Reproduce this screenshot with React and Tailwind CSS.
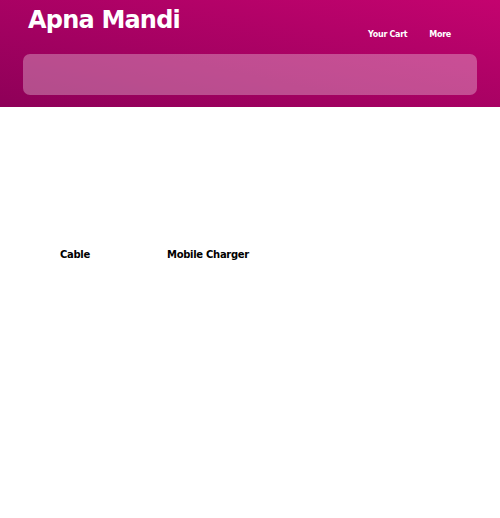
import React from "react";

const products = [
  { id: 1, name: "Cable" },
  { id: 2, name: "Mobile Charger" },
];

const App = () => {
  return (
    <div className="min-h-[518px] bg-white" style={{ fontFamily: '"DejaVu Sans", "Noto Sans", sans-serif' }}>
      <header className="h-[107px] bg-gradient-to-tr from-[#8e0058] to-[#c4036f] px-[23px]">
        <div className="flex items-start justify-between">
          <h1 className="pl-[5px] pt-[4px] text-[24px] font-bold leading-[32px] tracking-[-0.8px] text-white">
            Apna Mandi
          </h1>
          <nav className="mr-[26px] mt-[29px] flex gap-[22px] text-[8px] font-bold tracking-[-0.3px] text-white">
            <a href="#">Your Cart</a>
            <a href="#">More</a>
          </nav>
        </div>
        <div className="mt-[13px] h-[41px] rounded-[7px] bg-white/30" />
      </header>

      <main className="flex px-[20px] pt-[140px]">
        {products.map((p) => (
          <div key={p.id} className="w-[110px] mr-[23px] text-center">
            <p className="text-[10px] font-bold tracking-[-0.3px] text-black">{p.name}</p>
          </div>
        ))}
      </main>
    </div>
  );
};

export default App;
